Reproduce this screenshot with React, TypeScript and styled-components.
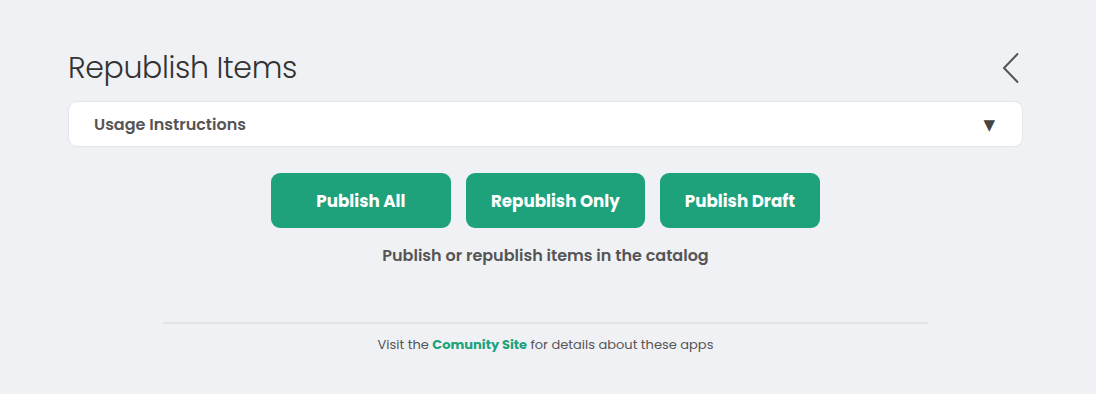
import { FC } from 'react';
import styled, { createGlobalStyle } from 'styled-components';

const Global = createGlobalStyle`
    html, body {
        margin: 0;
        padding: 0;
        background: #f0f1f5;
    }
    body {
        font-family: Poppins, "Open Sans", "DejaVu Sans", sans-serif;
        color: #555;
    }
`;

const Page = styled.div`
    width: 955px;
    margin-left: 68px;
    padding-top: 46px;
    height: 394px;
    box-sizing: border-box;
    display: flex;
    flex-direction: column;
`;

// title + back arrow
const Header = styled.div`
    display: flex;
    align-items: center;
    justify-content: space-between;
    height: 44px;
`;

const Title = styled.h1`
    margin: 0;
    font-size: 30px;
    font-weight: 300;
    color: #333;
    letter-spacing: -0.35px;
`;

const Back = styled.button`
    border: none;
    background: none;
    padding: 0;
    margin-right: 3px;
    display: flex;
    cursor: pointer;
`;

// accordion
const Accordion = styled.div`
    margin-top: 11px;
    height: 46px;
    box-sizing: border-box;
    background: #fff;
    border: 1px solid #e4e5e8;
    border-radius: 9px;
    display: flex;
    align-items: center;
    justify-content: space-between;
    padding: 0 27px 0 25px;
    font-size: 16px;
    font-weight: 600;
    color: #555;
`;

const Caret = styled.span`
    font-size: 15px;
    color: #444;
`;

const Buttons = styled.div`
    margin-top: 26px;
    display: flex;
    justify-content: center;
    gap: 15px;
`;

const Button = styled.button<{ $wide?: boolean }>`
    min-width: ${p => (p.$wide ? '180px' : '0')};
    height: 55px;
    padding: 0 25px;
    border: none;
    border-radius: 9px;
    background: #1da27c;
    color: #fff;
    font-family: inherit;
    font-size: 16.7px;
    font-weight: 700;
    cursor: pointer;
`;

const Subtitle = styled.p`
    margin: 15px 0 0;
    text-align: center;
    font-size: 16px;
    font-weight: 600;
    color: #555;
`;

const Divider = styled.hr`
    width: 765px;
    margin: 54px auto 0;
    border: none;
    border-top: 2px solid #e3e4e7;
`;

const Footer = styled.p`
    margin: 11px 0 0;
    text-align: center;
    font-size: 13px;
    color: #555;
    a {
        color: #1da27c;
        font-weight: 700;
        text-decoration: none;
    }
`;

const App: FC = () => {
    return (
        <>
            <Global />
            <Page>
                <Header>
                    <Title>Republish Items</Title>
                    <Back aria-label="back">
                        <svg width="18" height="32" viewBox="0 0 18 32">
                            <path d="M16 1.5 L2 16 L16 30.5" fill="none" stroke="#555" strokeWidth="2" />
                        </svg>
                    </Back>
                </Header>
                <Accordion>
                    <span>Usage Instructions</span>
                    <Caret>▼</Caret>
                </Accordion>
                <Buttons>
                    <Button $wide>Publish All</Button>
                    <Button>Republish Only</Button>
                    <Button>Publish Draft</Button>
                </Buttons>
                <Subtitle>Publish or republish items in the catalog</Subtitle>
                <Divider />
                <Footer>
                    Visit the <a href="#">Comunity Site</a> for details about these apps
                </Footer>
            </Page>
        </>
    );
};

export default App;
